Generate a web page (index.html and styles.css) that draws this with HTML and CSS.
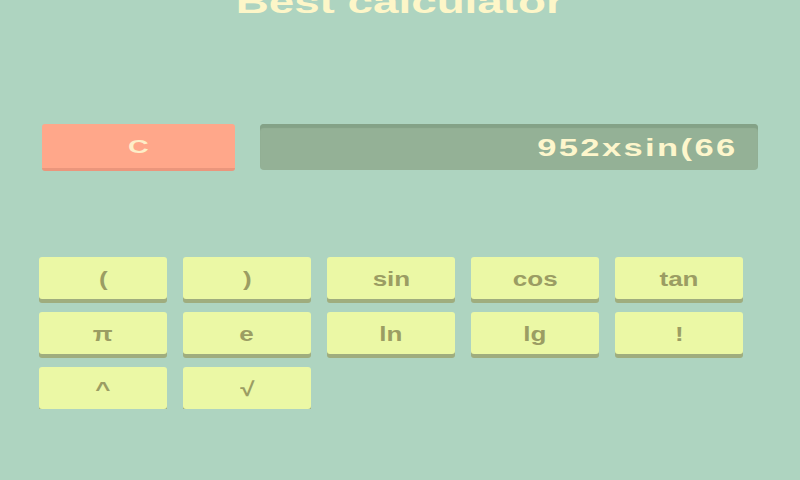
FILE: index.html
```html
<!DOCTYPE html>
<html lang="en">
<head>
  <meta charset="UTF-8">
  <meta name="viewport" content="width=device-width, initial-scale=1.0">
  <title>Best calculator</title>
  <link rel="stylesheet" href="styles.css">
</head>
<body>
  <div class="app">
    <h1 class="title"><span class="wide">Best calculator</span></h1>

    <!-- Clear button and expression display -->
    <div class="top-row">
      <button class="clear"><span class="wide">C</span></button>
      <div class="display"><span class="wide">952xsin(66</span></div>
    </div>

    <!-- Function keys -->
    <div class="keys">
      <button class="key"><span class="wide">(</span></button>
      <button class="key"><span class="wide">)</span></button>
      <button class="key"><span class="wide">sin</span></button>
      <button class="key"><span class="wide">cos</span></button>
      <button class="key"><span class="wide">tan</span></button>
      <button class="key"><span class="wide">π</span></button>
      <button class="key"><span class="wide">e</span></button>
      <button class="key"><span class="wide">ln</span></button>
      <button class="key"><span class="wide">lg</span></button>
      <button class="key"><span class="wide">!</span></button>
      <button class="key"><span class="wide">^</span></button>
      <button class="key"><span class="wide">√</span></button>
    </div>
  </div>
</body>
</html>
```

FILE: styles.css
```css
/* General Styles */
body {
  margin: 0;
  background-color: #aed4c0;
  font-family: "Liberation Sans", Arial, sans-serif;
  font-weight: bold;
  overflow: hidden;
}

.app {
  padding: 0 42px;
}

.wide {
  display: inline-block;
  transform: scaleX(1.43);
}

.title {
  margin: -15px 0 0;
  font-size: 32px;
  line-height: 34px;
  text-align: center;
  color: #fdf6c8;
}

.top-row {
  display: flex;
  gap: 25px;
  margin-top: 105px;
}

.clear {
  width: 193px;
  height: 47px;
  border: none;
  border-bottom: 3px solid #eb967c;
  border-radius: 3px;
  background-color: #ffa78a;
  color: #fdeec8;
  font-family: inherit;
  font-weight: bold;
  font-size: 18px;
  padding: 2px 0 0;
}

.clear .wide {
  transform: scaleX(1.6);
}

.display {
  flex: 1;
  height: 46px;
  display: flex;
  align-items: center;
  justify-content: flex-end;
  padding: 3px 20px 0 0;
  box-sizing: border-box;
  border-radius: 4px;
  background-color: #94b196;
  box-shadow: inset 0 4px 1px #84a287;
  color: #fdf6cc;
  font-size: 23px;
  letter-spacing: 1.6px;
}

.display .wide {
  transform: scaleX(1.5);
  transform-origin: right center;
}

.keys {
  display: grid;
  grid-template-columns: repeat(5, 128px);
  column-gap: 16px;
  row-gap: 13px;
  margin: 86px 0 0 -3px;
}

.key {
  height: 42px;
  border: none;
  border-radius: 3px;
  background-color: #ebf8a5;
  box-shadow: 0 4px 0 #9fad7e;
  color: #9b9d63;
  font-family: inherit;
  font-weight: bold;
  font-size: 20px;
  padding: 2px 0 0;
}

.key .wide {
  transform: scaleX(1.3);
}
```
